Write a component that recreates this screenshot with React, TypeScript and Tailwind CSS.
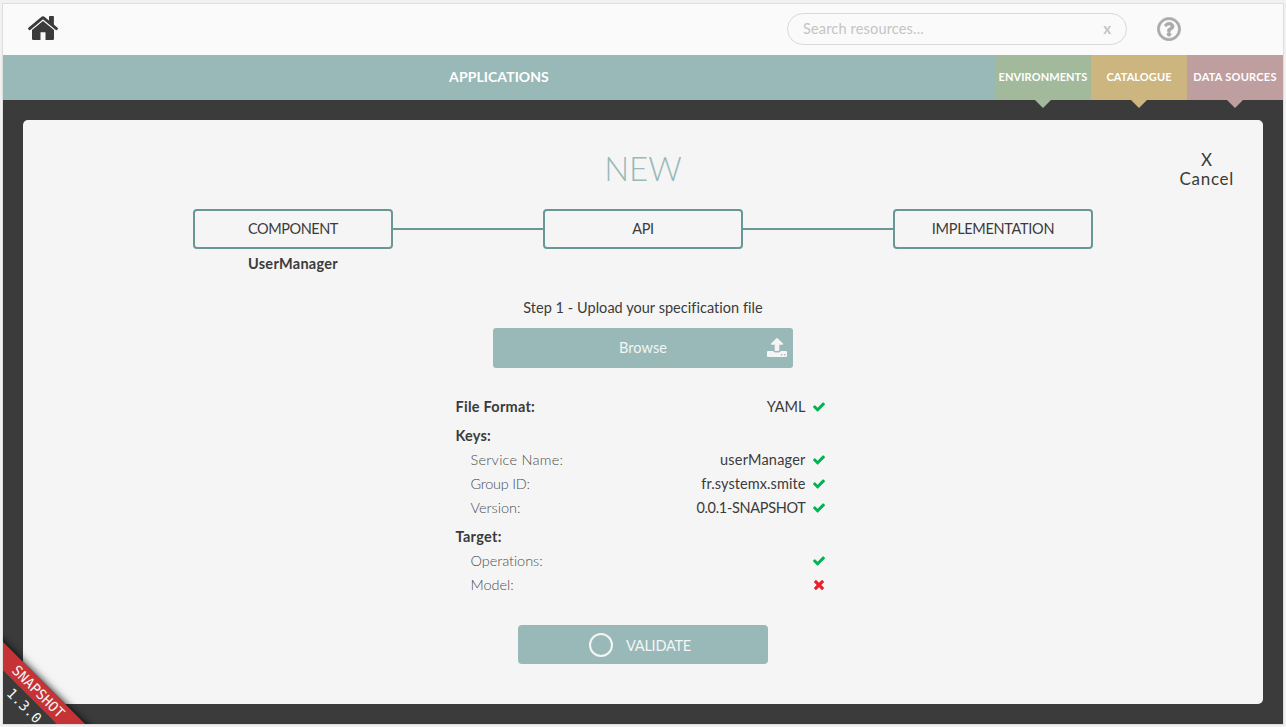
import React from "react";
import { FaRegQuestionCircle } from "react-icons/fa";

const House = ({ className = "" }: { className?: string }) => (
  <svg viewBox="0 0 30 24" className={className} fill="currentColor">
    <path d="M1.6 12.6 13.9 2.3Q15 1.4 16.1 2.3L28.4 12.6" fill="none" stroke="currentColor" strokeWidth="2.9" strokeLinecap="round" strokeLinejoin="round" />
    <path d="M21 .7Q21 0 21.7 0H25.2Q25.9 0 25.9 .7V9.4L21 5.4Z" />
    <path d="M15 4.9 26 14.1V22.8Q26 24 24.8 24H17.5V16.3H12.5V24H5.2Q4 24 4 22.8V14.1Z" />
  </svg>
);

const Check = ({ className = "" }: { className?: string }) => (
  <svg viewBox="121 334 1550 1188" className={className} fill="currentColor">
    <path d="M1671 566q0 40-28 68l-724 724-136 136q-28 28-68 28t-68-28l-136-136-362-362q-28-28-28-68t28-68l136-136q28-28 68-28t68 28l294 295 656-657q28-28 68-28t68 28l136 136q28 28 28 68z" />
  </svg>
);

const Cross = ({ className = "" }: { className?: string }) => (
  <svg viewBox="302 366 1188 1188" className={className} fill="currentColor">
    <path d="M1490 1322q0 40-28 68l-136 136q-28 28-68 28t-68-28l-294-294-294 294q-28 28-68 28t-68-28l-136-136q-28-28-28-68t28-68l294-294-294-294q-28-28-28-68t28-68l136-136q28-28 68-28t68 28l294 294 294-294q28-28 68-28t68 28l136 136q28 28 28 68t-28 68l-294 294 294 294q28 28 28 68z" />
  </svg>
);

const Upload = ({ className = "" }: { className?: string }) => (
  <svg viewBox="64 64 1664 1600" preserveAspectRatio="none" className={className} fill="currentColor">
    <path d="M1344 1472q0-26-19-45t-45-19-45 19-19 45 19 45 45 19 45-19 19-45zm256 0q0-26-19-45t-45-19-45 19-19 45 19 45 45 19 45-19 19-45zm128-224v320q0 40-28 68t-68 28h-1472q-40 0-68-28t-28-68v-320q0-40 28-68t68-28h427q21 56 70.5 92t110.5 36h256q61 0 110.5-36t70.5-92h427q40 0 68 28t28 68zm-325-648q-17 40-59 40h-256v448q0 26-19 45t-45 19h-256q-26 0-45-19t-19-45v-448h-256q-42 0-59-40-17-39 14-69l448-448q18-19 45-19t45 19l448 448q31 30 14 69z" />
  </svg>
);

const tabs = [
  { label: "ENVIRONMENTS", bg: "bg-[#a2b99c]", arrow: "border-t-[#a2b99c]", spacing: "tracking-[0.08px]" },
  { label: "CATALOGUE", bg: "bg-[#ccb57f]", arrow: "border-t-[#ccb57f]", spacing: "tracking-[0.08px]" },
  { label: "DATA SOURCES", bg: "bg-[#bf9e9f]", arrow: "border-t-[#bf9e9f]", spacing: "tracking-[0.25px]" },
];

type RowProps = { label: string; value?: string; ok?: boolean; spacing?: string; valueSpacing?: string };

function Row({ label, value, ok = true, spacing = "", valueSpacing = "" }: RowProps) {
  return (
    <div className="flex h-6 items-center pl-[15px]">
      <span className={`font-light text-[#4d4d4d] ${spacing}`}>{label}</span>
      <span className={`ml-auto ${valueSpacing}`}>{value}</span>
      <span className="ml-[7px] flex w-3 justify-center">
        {ok ? <Check className="h-[10px] w-3 text-[#00b354]" /> : <Cross className="size-[10px] text-[#e8212d]" />}
      </span>
    </div>
  );
}

function StepBox({ label, spacing }: { label: string; spacing: string }) {
  return (
    <div className={`flex h-10 w-[200px] items-center justify-center rounded-[4px] border-2 border-[#689795] ${spacing}`}>
      {label}
    </div>
  );
}

export default function App() {
  return (
    <div className="h-[727px] w-[1286px] overflow-hidden bg-[#f2f1f1] px-[3px] pt-1 font-['Lato',sans-serif] text-[14.5px] leading-5 text-[#3b3b3b]">
      <div className="relative flex h-[720px] flex-col overflow-hidden bg-[#3b3b3b] shadow-[0_0_0_1px_#dedede]">
        <header className="flex h-[51px] shrink-0 items-center bg-[#fafafa] pb-[2px]">
          <House className="ml-[25px] mb-[1px] h-6 w-[30px]" />
          <div className="ml-[729px] flex h-8 w-[340px] items-center rounded-full border border-[#d9d9d9] pl-[15px] pr-[15px] text-[#c4c4c4]">
            <span className="tracking-[0.17px]">Search resources...</span>
            <span className="ml-auto pb-[2px] text-[15px] font-bold">x</span>
          </div>
          <FaRegQuestionCircle className="ml-[30px] size-6 stroke-[#aaaaaa] stroke-[14px] text-[#aaaaaa]" />
        </header>

        <nav className="flex h-[45px] shrink-0 bg-[#99b9b8] font-bold text-white">
          <div className="flex w-[992px] items-center justify-center pb-[2px] text-[14px] tracking-[0.08px]">APPLICATIONS</div>
          {tabs.map((t) => (
            <div key={t.label} className={`relative flex w-24 items-center justify-center whitespace-nowrap pb-[2px] text-[11px] ${t.spacing} ${t.bg}`}>
              {t.label}
              <span className={`absolute left-10 top-full border-x-8 border-t-8 border-x-transparent ${t.arrow}`} />
            </div>
          ))}
        </nav>

        <main className="relative mx-5 mt-5 flex h-[584px] flex-col items-center rounded-[5px] bg-[#f5f5f5]">
          <h1 className="mt-7 text-[33px] font-light leading-10 text-[#99b9b8]">NEW</h1>
          <button className="absolute right-[29px] top-[30px] text-center text-[17px] leading-[19px] tracking-[0.7px]">
            <span className="block">X</span>
            <span className="block">Cancel</span>
          </button>

          <div className="mt-[21px] flex items-center">
            <StepBox label="COMPONENT" spacing="tracking-[-0.45px]" />
            <div className="h-[2px] w-[150px] bg-[#689795]" />
            <StepBox label="API" spacing="tracking-[-0.3px]" />
            <div className="h-[2px] w-[150px] bg-[#689795]" />
            <StepBox label="IMPLEMENTATION" spacing="tracking-[-0.3px]" />
          </div>
          <div className="mt-[5px] flex w-[900px]">
            <span className="w-[200px] text-center font-bold tracking-[0.28px]">UserManager</span>
          </div>

          <p className="mt-6 tracking-[0.04px]">Step 1 - Upload your specification file</p>
          <button className="mt-[10px] flex h-10 w-[300px] items-center rounded-[3px] bg-[#99b9b8] pr-[6px] text-[#f5f5f5]">
            <span className="flex-1 pl-[26px] text-center tracking-[0.1px]">Browse</span>
            <Upload className="mb-[1px] h-[19px] w-5" />
          </button>

          <section className="mt-[27px] mr-[5px] w-[370px] pr-px">
            <div className="flex h-6 items-center">
              <span className="font-bold tracking-[0.25px]">File Format:</span>
              <span className="ml-auto">YAML</span>
              <Check className="ml-[7px] h-[10px] w-3 text-[#00b354]" />
            </div>
            <div className="mt-[5px] flex h-6 items-center font-bold tracking-[0.2px]">Keys:</div>
            <Row label="Service Name:" value="userManager" spacing="tracking-[0.25px]" valueSpacing="tracking-[0.2px]" />
            <Row label="Group ID:" value="fr.systemx.smite" spacing="tracking-[-0.25px]" valueSpacing="tracking-[0.08px]" />
            <Row label="Version:" value="0.0.1-SNAPSHOT" valueSpacing="tracking-[-0.32px]" />
            <div className="mt-[5px] flex h-6 items-center font-bold tracking-[0.3px]">Target:</div>
            <Row label="Operations:" spacing="tracking-[-0.05px]" />
            <Row label="Model:" ok={false} />
          </section>

          <button className="mt-[28px] flex h-[39px] w-[250px] items-center justify-center rounded-[4px] bg-[#99b9b8] pr-[6px] text-[#f5f5f5]">
            <span className="mr-[13px] size-6 rounded-full border-2 border-[#f5f5f5]" />
            <span className="pt-[2px] tracking-[-0.25px]">VALIDATE</span>
          </button>
        </main>

        <div className="absolute -bottom-[10px] -left-[53.5px] flex h-[58px] w-[150px] rotate-45 flex-col items-center bg-[#3b3b3b] font-['DejaVu_Sans_Mono',monospace] text-[14px] leading-5 text-[#f5f5f5] shadow-[0_0_8px_#000]">
          <div className="h-5 w-full bg-[#c63337] text-center">SNAPSHOT</div>
          <div>1.3.0</div>
        </div>
      </div>
    </div>
  );
}
